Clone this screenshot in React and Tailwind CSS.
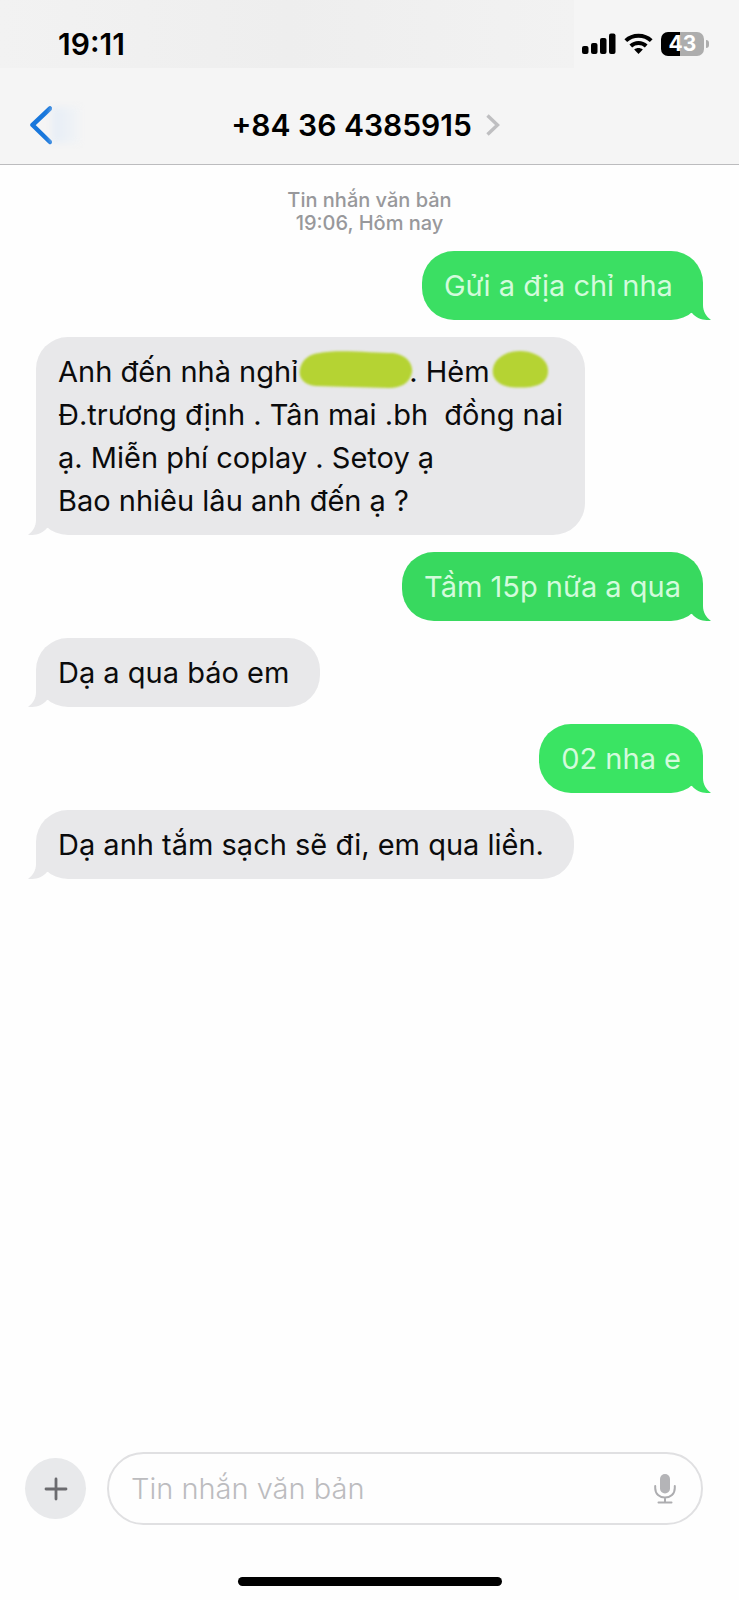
import React from "react";

const messages = [
  { id: 1, from: "me", tone: "text-[#3bdf63]", body: "Gửi a địa chỉ nha " },
  {
    id: 2,
    from: "them",
    tone: "text-[#e8e8ea]",
    body: (
      <>
        Anh đến nhà nghỉ
        <Marker label="Đã che" className="-mr-1 w-[115px]" d="M22 3 C38 -1 78 3 96 3 C110 5 116 14 115 22 C113 33 104 38 92 38 C66 37 40 37 18 36 C6 35 0 28 2 19 C4 9 12 4 22 3 Z" viewBox="0 0 116 40" />
        {". Hẻm"}
        <Marker label="Đã che" className="w-[60px]" d="M16 4 C24 0 38 0 46 4 C56 8 60 14 60 21 C60 30 54 35 42 37 C32 38 20 38 13 35 C5 31 2 26 3 19 C4 12 9 7 16 4 Z" viewBox="0 0 62 40" />
        <br />
        {"Đ.trương định . Tân mai .bh  đồng nai"}
        <br />
        ạ. Miễn phí coplay . Setoy ạ
        <br />
        Bao nhiêu lâu anh đến ạ ?
      </>
    ),
  },
  { id: 3, from: "me", tone: "text-[#38d95f]", body: "Tầm 15p nữa a qua" },
  { id: 4, from: "them", tone: "text-[#e8e8ea]", body: "Dạ a qua báo em " },
  { id: 5, from: "me", tone: "text-[#3ae463]", body: "02 nha e" },
  { id: 6, from: "them", tone: "text-[#e8e8ea]", body: "Dạ anh tắm sạch sẽ đi, em qua liền. " },
];

function Marker({ label, className, d, viewBox }) {
  return (
    <svg role="img" aria-label={label} viewBox={viewBox} preserveAspectRatio="none" className={`-mt-2 inline-block h-10 align-middle text-[#b5d333] blur-[1px] ${className}`}>
      <path d={d} fill="currentColor" />
    </svg>
  );
}

function Bubble({ from, tone, children }) {
  const mine = from === "me";
  return (
    <li className={`relative w-fit rounded-[32px] bg-current px-[22px] py-[13px] ${tone} ${mine ? "self-end" : "self-start"}`}>
      <svg
        aria-hidden="true"
        viewBox="0 0 32 34"
        className={`absolute bottom-0 h-[34px] w-8 ${mine ? "-right-2" : "-left-2 -scale-x-100"}`}
      >
        <path d="M0 0 H24 V19 C24 25 27 30.500 32 33.700 C25 34.800 18 33 13 27 L0 24 Z" fill="currentColor" />
      </svg>
      <p className={`relative text-[29px] leading-[43px] whitespace-pre ${mine ? "text-[#d3fbdc]" : "text-[#0b0b0c]"}`}>{children}</p>
    </li>
  );
}

function StatusBar() {
  return (
    <div className="flex h-[68px] items-center">
      <div className="flex h-full flex-1 items-center bg-linear-to-r from-[#f2f2f2] via-[#eeeeee] to-[#f2f2f2] pt-5 pl-[58px]">
        <time className="text-[30px] leading-8 font-semibold">19:11</time>
      </div>
      <div className="flex items-center gap-2 pt-5 pr-[30px] pl-2">
        <svg role="img" aria-label="Sóng di động" viewBox="0 0 34 22" className="h-[22px] w-[34px]">
          <rect x="0" y="13" width="6.5" height="8" rx="2" />
          <rect x="9" y="10" width="6.5" height="11" rx="2" />
          <rect x="18" y="5" width="6.5" height="16" rx="2" />
          <rect x="27" y="0.5" width="6.5" height="20.5" rx="2" />
        </svg>
        <svg role="img" aria-label="Wi-Fi" viewBox="0 0 29 22" className="h-[22px] w-[29px]" fill="none" stroke="#000" strokeWidth="4">
          <path d="M1.800 7.600 C8.700 1 20.300 1 27.200 7.600" />
          <path d="M6.800 13 C11.200 9 17.800 9 22.200 13" />
          <path d="M10.200 16.600 C12.600 14.600 16.400 14.600 18.800 16.600 L14.500 21 Z" fill="#000" stroke="none" />
        </svg>
        <div className="flex items-center gap-[2px]">
          <div className="flex h-6 w-[43px] items-center justify-center rounded-[7px] bg-linear-to-r from-black from-[44%] to-[#adadad] to-[44%] text-[21px] leading-6 font-bold text-white">
            43
          </div>
          <div className="h-2 w-[3px] rounded-r-full bg-[#adadad]" />
        </div>
      </div>
    </div>
  );
}

export default function App() {
  return (
    <div className="flex min-h-screen flex-col bg-[#fefefe] font-['Inter','Noto_Sans',sans-serif] text-black">
      <header className="border-b border-[#bcbcbe] bg-[#f5f5f5]">
        <StatusBar />
        <div className="grid h-24 grid-cols-[1fr_auto_1fr] items-center pt-[18px] pr-9 pl-7">
          <button type="button" aria-label="Quay lại" className="flex items-center justify-self-start">
            <svg viewBox="0 0 24 40" className="h-10 w-6" fill="none" stroke="#1877dc" strokeWidth="4.5" strokeLinecap="round" strokeLinejoin="round">
              <path d="M22 3.500 L4.500 20 L22 37" />
            </svg>
            <span className="h-9 w-7 bg-linear-to-r from-[#e6edf6] to-[#f2f4f6] blur-[3px]" />
          </button>
          <button type="button" className="flex items-center gap-[14px]">
            <h1 className="text-[30px] leading-9 font-semibold">+84 36 4385915</h1>
            <svg aria-hidden="true" viewBox="0 0 14 22" className="h-[22px] w-[14px]" fill="none" stroke="#bfbfc1" strokeWidth="3.4">
              <path d="M1.500 1.500 L11.500 11 L1.500 20.500" />
            </svg>
          </button>
        </div>
      </header>

      <main className="flex-1 px-9 pt-6">
        <p className="text-center text-[20px] leading-[23px] font-medium text-[#98989b]">
          Tin nhắn văn bản
          <br />
          19:06, Hôm nay
        </p>
        <ol className="mt-4 flex flex-col gap-[17px]">
          {messages.map((m) => (
            <Bubble key={m.id} from={m.from} tone={m.tone}>
              {m.body}
            </Bubble>
          ))}
        </ol>
      </main>

      <footer>
        <form className="flex items-center gap-[21px] pr-9 pl-[25px]" onSubmit={(e) => e.preventDefault()}>
          <button type="button" aria-label="Thêm" className="flex size-[61px] items-center justify-center rounded-full bg-[#e8e9eb]">
            <svg viewBox="0 0 24 24" className="size-6" fill="none" stroke="#6b6b6f" strokeWidth="2.8" strokeLinecap="round">
              <path d="M12 2 V22 M2 12 H22" />
            </svg>
          </button>
          <div className="flex h-[73px] flex-1 items-center rounded-full border-2 border-[#e0e0e2] pr-[25px] pl-[22px]">
            <input
              type="text"
              aria-label="Tin nhắn văn bản"
              placeholder="Tin nhắn văn bản"
              className="h-full min-w-0 flex-1 bg-transparent text-[29px] font-light outline-none placeholder:text-[#bcbcbf]"
            />
            <button type="button" aria-label="Đọc chính tả">
              <svg viewBox="0 0 22 30" className="h-[30px] w-[22px]" fill="none" stroke="#adadb0" strokeWidth="2" strokeLinecap="round">
                <rect x="6" y="0" width="10" height="19.500" rx="5" fill="#b4b4b7" stroke="none" />
                <path d="M1.200 12 V14 C1.200 20 5.500 23.600 11 23.600 C16.500 23.600 20.800 20 20.800 14 V12 M11 23.600 V28 M4.500 28.500 H17.500" />
              </svg>
            </button>
          </div>
        </form>
        <div className="mx-auto mt-[52px] mb-[14px] h-[9px] w-[264px] rounded-full bg-black" />
      </footer>
    </div>
  );
}
